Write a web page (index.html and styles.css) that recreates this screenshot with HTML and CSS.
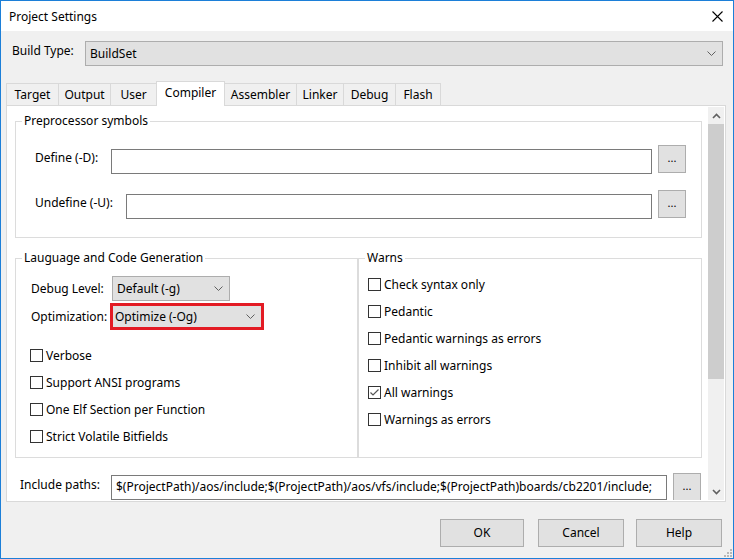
FILE: index.html
```html
<!DOCTYPE html>
<html>
<head>
<meta charset="utf-8">
<title>Project Settings</title>
<link rel="stylesheet" href="styles.css">
</head>
<body>
<div class="window">
  <div class="titlebar">
    <span class="title">Project Settings</span>
    <svg class="close" width="11" height="11" viewBox="0 0 11 11"><path d="M0.5 0.5 L10.5 10.5 M10.5 0.5 L0.5 10.5" stroke="#000" stroke-width="1.1" fill="none"/></svg>
  </div>
  <div class="body">
    <div class="build-row">
      <span class="build-label">Build Type:</span>
      <div class="combo combo-build"><span>BuildSet</span><svg class="chev" width="9" height="5" viewBox="0 0 9 5"><polyline points="0.5,0.5 4.5,4.5 8.5,0.5" fill="none" stroke="#606060" stroke-width="1"/></svg></div>
    </div>
    <div class="tabs">
      <div class="tab">Target</div>
      <div class="tab">Output</div>
      <div class="tab">User</div>
      <div class="tab active">Compiler</div>
      <div class="tab">Assembler</div>
      <div class="tab">Linker</div>
      <div class="tab">Debug</div>
      <div class="tab">Flash</div>
    </div>
    <div class="panel">
      <div class="viewport">
        <div class="content">
          <fieldset class="group group-pre">
            <legend>Preprocessor symbols</legend>
            <div class="group-body pre-body">
              <div class="field-row">
                <span class="field-label label-define">Define (-D):</span>
                <div class="text-input"></div>
                <div class="browse">...</div>
              </div>
              <div class="field-row row-undefine">
                <span class="field-label label-undefine">Undefine (-U):</span>
                <div class="text-input"></div>
                <div class="browse">...</div>
              </div>
            </div>
          </fieldset>
          <div class="group-row">
            <fieldset class="group group-lang">
              <legend>Lauguage and Code Generation</legend>
              <div class="group-body lang-body">
                <div class="opt-row">
                  <span class="opt-label label-debug">Debug Level:</span>
                  <div class="combo combo-debug"><span>Default (-g)</span><svg class="chev" width="9" height="5" viewBox="0 0 9 5"><polyline points="0.5,0.5 4.5,4.5 8.5,0.5" fill="none" stroke="#606060" stroke-width="1"/></svg></div>
                </div>
                <div class="opt-row row-opt">
                  <span class="opt-label label-opt">Optimization:</span>
                  <div class="combo combo-opt"><span>Optimize (-Og)</span><svg class="chev" width="9" height="5" viewBox="0 0 9 5"><polyline points="0.5,0.5 4.5,4.5 8.5,0.5" fill="none" stroke="#606060" stroke-width="1"/></svg></div>
                </div>
                <div class="checks lang-checks">
                  <div class="check"><span class="box"></span><span>Verbose</span></div>
                  <div class="check"><span class="box"></span><span>Support ANSI programs</span></div>
                  <div class="check"><span class="box"></span><span>One Elf Section per Function</span></div>
                  <div class="check"><span class="box"></span><span>Strict Volatile Bitfields</span></div>
                </div>
              </div>
            </fieldset>
            <fieldset class="group group-warn">
              <legend>Warns</legend>
              <div class="group-body warn-body">
                <div class="checks">
                  <div class="check"><span class="box"></span><span>Check syntax only</span></div>
                  <div class="check"><span class="box"></span><span>Pedantic</span></div>
                  <div class="check"><span class="box"></span><span>Pedantic warnings as errors</span></div>
                  <div class="check"><span class="box"></span><span>Inhibit all warnings</span></div>
                  <div class="check"><span class="box checked"><svg width="11" height="11" viewBox="0 0 11 11"><polyline points="1.5,5.5 4,8 9.5,2.5" fill="none" stroke="#555" stroke-width="1.2"/></svg></span><span>All warnings</span></div>
                  <div class="check"><span class="box"></span><span>Warnings as errors</span></div>
                </div>
              </div>
            </fieldset>
          </div>
          <div class="include-row">
            <span class="include-label">Include paths:</span>
            <div class="text-input include-input">$(ProjectPath)/aos/include;$(ProjectPath)/aos/vfs/include;$(ProjectPath)boards/cb2201/include;</div>
            <div class="browse">...</div>
          </div>
        </div>
      </div>
      <div class="scrollbar">
        <div class="sb-arrow"><svg width="9" height="6" viewBox="0 0 9 6"><polyline points="1,5 4.5,1.5 8,5" fill="none" stroke="#606060" stroke-width="1.6"/></svg></div>
        <div class="sb-thumb"></div>
        <div class="sb-track"></div>
        <div class="sb-arrow"><svg width="9" height="6" viewBox="0 0 9 6"><polyline points="1,1 4.5,4.5 8,1" fill="none" stroke="#606060" stroke-width="1.6"/></svg></div>
      </div>
    </div>
    <div class="buttons">
      <div class="btn btn-ok">OK</div>
      <div class="btn btn-cancel">Cancel</div>
      <div class="btn btn-help">Help</div>
    </div>
  </div>
  <svg class="grip" width="8" height="8" viewBox="0 0 8 8">
    <rect x="6" y="0" width="2" height="2" fill="#b8b8b8"/>
    <rect x="3" y="3" width="2" height="2" fill="#b8b8b8"/>
    <rect x="6" y="3" width="2" height="2" fill="#b8b8b8"/>
    <rect x="0" y="6" width="2" height="2" fill="#b8b8b8"/>
    <rect x="3" y="6" width="2" height="2" fill="#b8b8b8"/>
    <rect x="6" y="6" width="2" height="2" fill="#b8b8b8"/>
  </svg>
</div>
</body>
</html>
```

FILE: styles.css
```css
* { box-sizing: border-box; }
html, body { margin: 0; padding: 0; }
body {
  font-family: "Noto Sans", "Segoe UI", sans-serif;
  font-size: 12px;
  line-height: 16px;
  color: #000;
  background: #fff;
}
.window {
  width: 734px;
  height: 559px;
  border: 1px solid #1c7fd8;
  display: flex;
  flex-direction: column;
  position: relative;
  background: #f0f0f0;
}
.titlebar {
  height: 30px;
  flex: none;
  background: #fff;
  display: flex;
  align-items: center;
  justify-content: space-between;
  padding: 0 10px 0 8px;
}
.title { margin-top: 1px; }
.close { display: block; }
.body { flex: 1; display: flex; flex-direction: column; }

.build-row {
  display: flex;
  margin-top: 10px;
  padding: 0 10px 0 11px;
}
.build-label { width: 73px; margin-top: 2px; }
.combo {
  display: flex;
  align-items: center;
  justify-content: space-between;
  background: #e1e1e1;
  border: 1px solid #adadad;
  padding: 0 6px 0 4px;
}
.combo-build { flex: 1; height: 25px; }
.chev { display: block; flex: none; }

.tabs {
  display: flex;
  align-items: flex-end;
  height: 24px;
  margin-top: 15px;
  padding-left: 5px;
}
.tab {
  height: 22px;
  border: 1px solid #d9d9d9;
  border-bottom: none;
  background: #f0f0f0;
  margin-right: -1px;
  display: flex;
  align-items: center;
  justify-content: center;
}
.tab:nth-child(1) { width: 53px; }
.tab:nth-child(2) { width: 53px; }
.tab:nth-child(3) { width: 47px; }
.tab:nth-child(4) { width: 69px; }
.tab:nth-child(5) { width: 73px; }
.tab:nth-child(6) { width: 48px; }
.tab:nth-child(7) { width: 53px; }
.tab:nth-child(8) { width: 46px; }
.tab.active {
  height: 25px;
  margin-bottom: -1px;
  background: #fff;
  position: relative;
  z-index: 1;
  align-items: flex-start;
  padding-top: 3px;
}

.panel {
  width: 720px;
  height: 397px;
  margin-left: 5px;
  background: #fff;
  border: 1px solid #d9d9d9;
  display: flex;
  padding: 1px 1px 1px 0;
}
.viewport { flex: 1; overflow: hidden; }
.content { padding: 6px 6px 0 8px; }

.group {
  border: 1px solid #dcdcdc;
  margin: 0;
  padding: 0;
  min-width: 0;
}
.group legend {
  padding: 0 2px;
  margin-left: 6px;
  line-height: 16px;
}
.pre-body { padding: 16px 15px 18px 19px; }
.field-row { display: flex; align-items: flex-start; }
.row-undefine { margin-top: 16px; }
.field-label { margin-top: 5px; flex: none; }
.label-define { width: 76px; }
.label-undefine { width: 91px; }
.text-input {
  flex: 1;
  height: 25px;
  margin-top: 4px;
  border: 1px solid #7a7a7a;
  background: #fff;
}
.browse {
  width: 28px;
  height: 28px;
  flex: none;
  margin-left: 6px;
  background: #e1e1e1;
  border: 1px solid #adadad;
  display: flex;
  align-items: center;
  justify-content: center;
  font-size: 11px;
  padding-bottom: 2px;
}

.group-row { display: flex; margin-top: 12px; }
.group-lang { width: 343px; flex: none; }
.group-warn { flex: 1; margin-left: 0; }
.lang-body { padding: 10px 0 7px 14px; }
.opt-row { display: flex; align-items: center; }
.row-opt { margin-top: 2px; }
.opt-label { margin-left: 1px; flex: none; }
.label-debug { width: 81px; }
.label-opt { width: 79px; }
.combo-debug { width: 118px; height: 25px; }
.combo-opt {
  width: 154px;
  height: 27px;
  border: 3px solid #e31b24;
  padding: 0 6px 0 2px;
}
.lang-checks { margin-top: 12px; }
.check { display: flex; align-items: center; height: 27px; }
.box {
  width: 13px;
  height: 13px;
  border: 1px solid #333;
  background: #fff;
  margin-right: 3px;
  flex: none;
  display: flex;
  align-items: center;
  justify-content: center;
}
.box svg { display: block; }
.warn-body { padding: 5px 0 0 9px; }

.include-row { display: flex; align-items: flex-start; margin-top: 15px; }
.include-label { width: 91px; margin-left: 5px; margin-top: 4px; flex: none; }
.include-input {
  flex: none;
  width: 556px;
  margin-top: 2px;
  padding-left: 4px;
  line-height: 22px;
  white-space: nowrap;
  overflow: hidden;
}

.scrollbar {
  width: 16px;
  flex: none;
  background: #f0f0f0;
  display: flex;
  flex-direction: column;
}
.sb-arrow {
  height: 17px;
  flex: none;
  display: flex;
  align-items: center;
  justify-content: center;
}
.sb-arrow svg { display: block; }
.sb-thumb { height: 255px; flex: none; background: #cdcdcd; }
.sb-track { flex: 1; }

.buttons {
  display: flex;
  justify-content: flex-end;
  margin-top: 17px;
  padding-right: 11px;
}
.btn {
  height: 28px;
  background: #e1e1e1;
  border: 1px solid #adadad;
  display: flex;
  align-items: center;
  justify-content: center;
}
.btn-ok { width: 84px; }
.btn-cancel { width: 86px; margin-left: 14px; }
.btn-help { width: 86px; margin-left: 12px; }
.grip { position: absolute; right: 1px; bottom: 1px; display: block; }
```
